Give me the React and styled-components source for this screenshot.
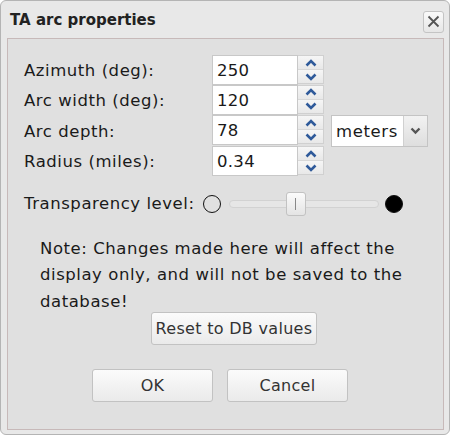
import styled, { createGlobalStyle } from "styled-components";

const GlobalStyle = createGlobalStyle`
  html, body { margin: 0; padding: 0; background: #ffffff; }
  body { font-family: "DejaVu Sans", "Noto Sans", sans-serif; }
`;

const Dialog = styled.div`
  box-sizing: border-box;
  width: 450px;
  height: 435px;
  border: 1px solid #b4b4b4;
  border-radius: 6px;
  background: #e8e8e8;
  display: flex;
  flex-direction: column;
  padding: 0 5px 4px 6px;
`;

const TitleBar = styled.div`
  height: 37px;
  display: flex;
  align-items: center;
  justify-content: space-between;
  padding: 0 0 0 3px;
`;

const Title = styled.h1`
  margin: 0;
  font-size: 15px;
  font-weight: bold;
  color: #222;
`;

const CloseButton = styled.button`
  box-sizing: border-box;
  width: 21px;
  height: 22px;
  margin-top: 4px;
  padding: 0;
  border: 1px solid #c4c4c4;
  border-radius: 3px;
  background: linear-gradient(#fafafa, #e6e6e6);
  display: flex;
  align-items: center;
  justify-content: center;
`;

const Panel = styled.div`
  flex: 1;
  border: 1px solid #c7b9b9;
  background: #e0e0e0;
  padding: 17px 0 0 16px;
  color: #1a1a1a;
  font-size: 16.5px;
  letter-spacing: 0.55px;
`;

const FieldGrid = styled.div`
  display: grid;
  grid-template-columns: 188px 112px auto;
  justify-content: start;
  align-items: center;
`;

const Label = styled.div`
  height: 29.5px;
  display: flex;
  align-items: center;
`;

const Spinner = styled.div`
  display: flex;
  height: 29.5px;
`;

const TextBox = styled.div`
  box-sizing: border-box;
  width: 86px;
  height: 30px;
  margin-top: -1px;
  border: 1px solid #c8c8c8;
  background: #fff;
  padding: 5px 0 0 4px;
  letter-spacing: 0.3px;
`;

const SpinButtons = styled.div`
  box-sizing: border-box;
  display: flex;
  flex-direction: column;
  width: 26px;
  border: 1px solid #d0d0d0;
  border-left: none;
  margin-top: -1px;
  height: 29px;
`;

const SpinHalf = styled.div`
  flex: 1;
  display: flex;
  align-items: center;
  justify-content: center;
  background: linear-gradient(#f6f6f6, #e8e8e8);
  border-top: ${(p) => (p.$bottom ? "1px solid #d8d8d8" : "none")};
`;

const UnitSelect = styled.div`
  box-sizing: border-box;
  display: flex;
  width: 97px;
  height: 32px;
  margin-left: 7px;
  border: 1px solid #c4c4c4;
  background: #fff;
`;

const UnitText = styled.div`
  width: 67px;
  overflow: hidden;
  white-space: nowrap;
  padding: 6px 0 0 4px;
  letter-spacing: 0.6px;
`;

const UnitArrow = styled.div`
  flex: 1;
  border-left: 1px solid #d0d0d0;
  background: linear-gradient(#f2f2f2, #dedede);
  display: flex;
  align-items: center;
  justify-content: center;
`;

const SliderRow = styled.div`
  display: flex;
  align-items: center;
  margin-top: 13px;
  height: 28px;
`;

const SliderLabel = styled.span`
  width: 179px;
  white-space: nowrap;
`;

const Dot = styled.span`
  box-sizing: border-box;
  width: 18px;
  height: 18px;
  border-radius: 50%;
  border: 1.5px solid #111;
  background: ${(p) => (p.$filled ? "#000" : "transparent")};
`;

const Track = styled.div`
  position: relative;
  box-sizing: border-box;
  width: 150px;
  height: 8px;
  margin: 0 6px 0 8px;
  border: 1px solid #d2d2d2;
  border-radius: 4px;
  background: #e6e6e6;
`;

const Thumb = styled.div`
  position: absolute;
  top: -9px;
  box-sizing: border-box;
  width: 20px;
  height: 24px;
  border: 1px solid #c2c2c2;
  border-radius: 3px;
  background: linear-gradient(#fbfbfb, #e4e4e4);
  display: flex;
  justify-content: center;
  align-items: center;
  &::after {
    content: "";
    width: 1px;
    height: 12px;
    background: #888;
  }
`;

const Note = styled.p`
  margin: 18px 0 0 16px;
  width: 380px;
  line-height: 26.5px;
`;

const ButtonRow = styled.div`
  display: flex;
  gap: 14px;
  margin-top: ${(p) => p.$top}px;
  padding-left: ${(p) => p.$left}px;
`;

const Button = styled.button`
  box-sizing: border-box;
  width: ${(p) => p.$width}px;
  height: 33px;
  border: 1px solid #c2c2c2;
  border-radius: 3px;
  background: linear-gradient(#fbfbfb, #eaeaea);
  font-family: inherit;
  font-size: 16px;
  letter-spacing: 0.3px;
  color: #333;
  padding: 0;
`;

const Chevron = ({ up }) => (
  <svg width="12" height="8" viewBox="0 0 12 8">
    <path
      d={up ? "M1.5 6.5 L6 2 L10.5 6.5" : "M1.5 1.5 L6 6 L10.5 1.5"}
      fill="none"
      stroke="#2f5a9a"
      strokeWidth="2.6"
    />
  </svg>
);

const fields = [
  { label: "Azimuth (deg):", value: "250" },
  { label: "Arc width (deg):", value: "120" },
  { label: "Arc depth:", value: "78", unit: true },
  { label: "Radius (miles):", value: "0.34" },
];

export default function App() {
  const level = 0.43;
  return (
    <>
      <GlobalStyle />
      <Dialog>
        <TitleBar>
          <Title>TA arc properties</Title>
          <CloseButton>
            <svg width="13" height="13" viewBox="0 0 13 13">
              <path d="M1.5 1.5 L11.5 11.5 M11.5 1.5 L1.5 11.5" stroke="#555" strokeWidth="1.8" />
            </svg>
          </CloseButton>
        </TitleBar>
        <Panel>
          <FieldGrid>
            {fields.map((f) => (
              <>
                <Label key={f.label}>{f.label}</Label>
                <Spinner>
                  <TextBox>{f.value}</TextBox>
                  <SpinButtons>
                    <SpinHalf>
                      <Chevron up />
                    </SpinHalf>
                    <SpinHalf $bottom>
                      <Chevron />
                    </SpinHalf>
                  </SpinButtons>
                </Spinner>
                <div>
                  {f.unit && (
                    <UnitSelect>
                      <UnitText>meters</UnitText>
                      <UnitArrow>
                        <svg width="11" height="8" viewBox="0 0 11 8">
                          <path d="M1.5 1.5 L5.5 5.5 L9.5 1.5" fill="none" stroke="#555" strokeWidth="2.4" />
                        </svg>
                      </UnitArrow>
                    </UnitSelect>
                  )}
                </div>
              </>
            ))}
          </FieldGrid>
          <SliderRow>
            <SliderLabel>Transparency level:</SliderLabel>
            <Dot />
            <Track>
              <Thumb style={{ left: `${level * 130}px` }} />
            </Track>
            <Dot $filled />
          </SliderRow>
          <Note>
            Note: Changes made here will affect the display only, and will not be saved to the
            database!
          </Note>
          <ButtonRow $top={-3} $left={127}>
            <Button $width={166}>Reset to DB values</Button>
          </ButtonRow>
          <ButtonRow $top={24} $left={68}>
            <Button $width={121}>OK</Button>
            <Button $width={121}>Cancel</Button>
          </ButtonRow>
        </Panel>
      </Dialog>
    </>
  );
}
